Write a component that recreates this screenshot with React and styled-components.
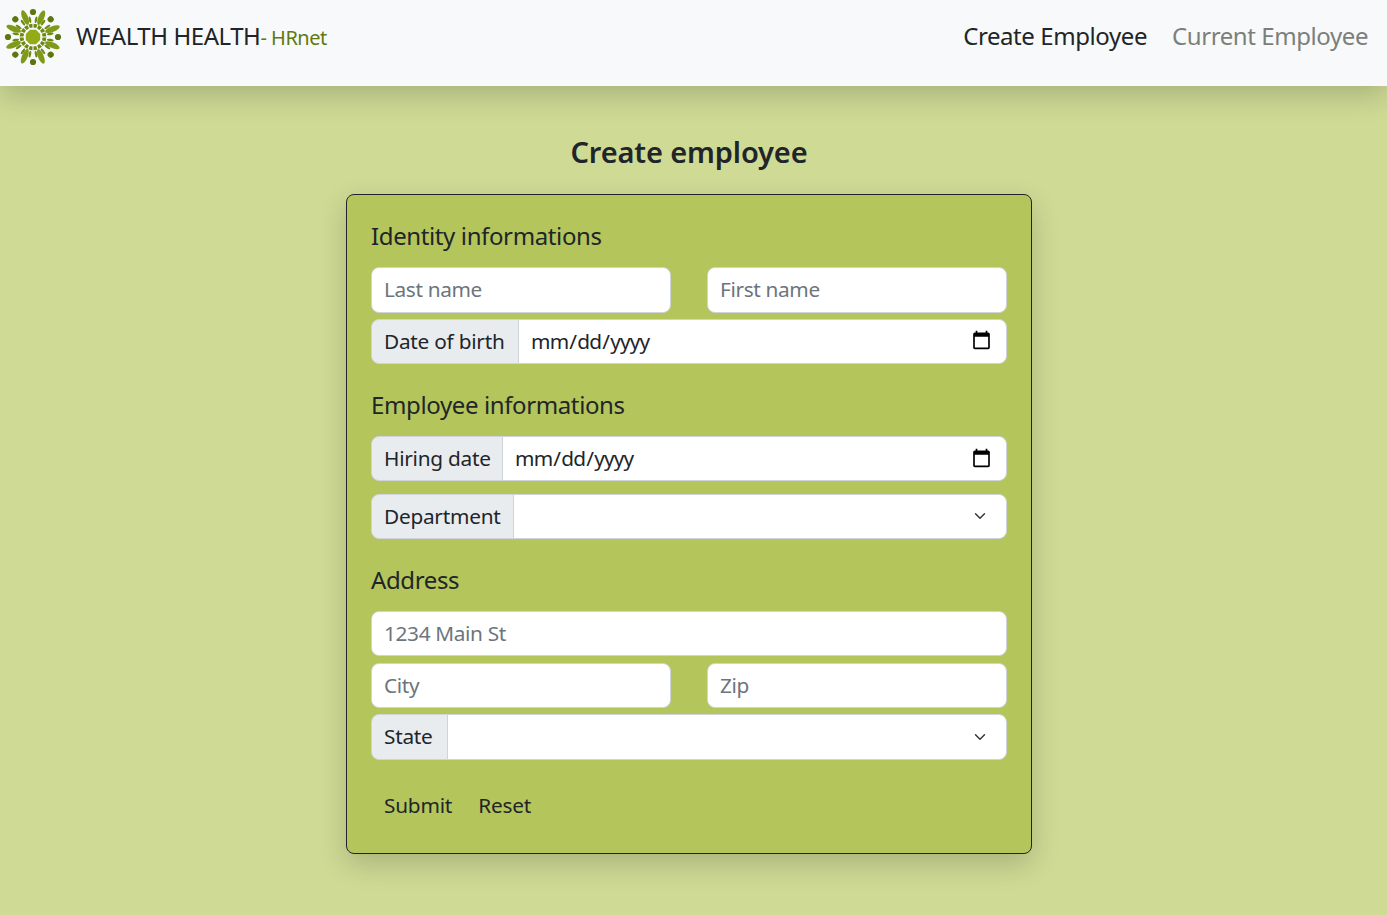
import React from "react";
import styled, { createGlobalStyle } from "styled-components";

const Global = createGlobalStyle`
  * { box-sizing: border-box; }
  html, body { margin: 0; }
  body {
    min-height: 100vh;
    background: #cfda95;
    color: #212529;
    font-family: "Noto Sans", "Open Sans", sans-serif;
  }
`;

const Header = styled.header`
  height: 86px;
  background: #f8f9fa;
  display: flex;
  align-items: center;
  justify-content: space-between;
  padding: 0 19px 12px 4px;
  box-shadow: 0 10px 28px rgba(0, 0, 0, 0.18);
  position: relative;
`;
const Brand = styled.div`
  display: flex;
  align-items: center;
  gap: 14px;
`;
const BrandText = styled.div`
  font-size: 24px;
  letter-spacing: -0.44px;
  color: #212529;
  white-space: nowrap;
  margin-top: -3px;
`;
const BrandSub = styled.span`
  font-size: 20px;
  letter-spacing: -0.5px;
  color: #5f7a10;
`;
const Nav = styled.nav`
  display: flex;
  gap: 25px;
  margin-top: -3px;
`;
const NavLink = styled.a`
  font-size: 24px;
  letter-spacing: -0.42px;
  color: ${(p) => (p.$active ? "#212529" : "#7b7f7a")};
`;
const Main = styled.main`
  display: flex;
  flex-direction: column;
  align-items: center;
  padding: 46px 9px 60px 0;
`;
const Title = styled.h1`
  margin: 0 0 22px;
  font-size: 29px;
  line-height: 40px;
  font-weight: 600;
  letter-spacing: -0.13px;
  color: #212529;
`;
const Card = styled.form`
  width: 686px;
  height: 660px;
  background: #b3c55b;
  border: 1px solid #212529;
  border-radius: 8px;
  padding: 0 24px;
  box-shadow: 0 10px 28px rgba(0, 0, 0, 0.18);
`;
const SectionTitle = styled.h2`
  margin: ${(p) => (p.$first ? "25.5px 0 17.5px" : "25.7px 0 17.2px")};
  font-size: 24px;
  line-height: 29px;
  font-weight: 400;
  letter-spacing: -0.38px;
  color: #212529;
`;
const Row = styled.div`
  display: flex;
  gap: 36px;
  margin-bottom: ${(p) => p.$mb || "6.1px"};
`;
const fieldBase = `
  height: 45.5px;
  font: inherit;
  font-size: 20.8px;
  color: #212529;
  background-color: #fff;
  border: 1px solid #ced4da;
  padding: 0 12px 1px;
  outline: none;
`;
const TextInput = styled.input`
  ${fieldBase}
  flex: 1;
  min-width: 0;
  border-radius: 8px;
  letter-spacing: -0.35px;
  &::placeholder {
    color: #6c757d;
    opacity: 1;
  }
`;
const InputGroup = styled.div`
  display: flex;
  flex: 1;
`;
const Addon = styled.label`
  height: 45.5px;
  display: flex;
  align-items: center;
  padding: 0 12px 1px;
  font-size: 20.8px;
  letter-spacing: -0.25px;
  color: #212529;
  background: #e9ecef;
  border: 1px solid #ced4da;
  border-radius: 8px 0 0 8px;
  white-space: nowrap;
  width: ${(p) => p.$width};
  flex: none;
`;
const DateInput = styled.input`
  ${fieldBase}
  flex: 1;
  min-width: 0;
  margin-left: -1px;
  border-radius: 0 8px 8px 0;
  padding-left: 11px;
  letter-spacing: -0.8px;
  &::-webkit-calendar-picker-indicator {
    margin-right: 0;
  }
`;
const Select = styled.select`
  ${fieldBase}
  flex: 1;
  margin-left: -1px;
  border-radius: 0 8px 8px 0;
  appearance: none;
  background-image: url("data:image/svg+xml,%3csvg xmlns='http://www.w3.org/2000/svg' viewBox='0 0 16 16'%3e%3cpath fill='none' stroke='%23343a40' stroke-linecap='round' stroke-linejoin='round' stroke-width='2' d='m2 5 6 6 6-6'/%3e%3c/svg%3e");
  background-repeat: no-repeat;
  background-position: right 20px center;
  background-size: 12px 12px;
`;
const Actions = styled.div`
  display: flex;
  margin-top: 23px;
`;
const Button = styled.button`
  height: 45.2px;
  background: transparent;
  border: 1px solid transparent;
  padding: 0 12px;
  font: inherit;
  font-size: 20.8px;
  letter-spacing: -0.2px;
  color: #212529;
`;

function Logo() {
  const eight = [0, 45, 90, 135, 180, 225, 270, 315];
  const sixteen = Array.from({ length: 16 }, (_, i) => i * 22.5);
  return (
    <svg width="58" height="58" viewBox="-29 -29 58 58" aria-label="Wealth Health logo">
      {eight.map((a) => (
        <g key={a} transform={`rotate(${a})`}>
          <circle cx="0" cy="-25" r="3.1" fill="#5c7610" />
          <ellipse cx="0" cy="-21" rx="2.9" ry="7.8" fill="#7f9a18" transform="rotate(23)" />
          <ellipse cx="0" cy="-17.5" rx="1.2" ry="3.4" fill="#6f8a14" transform="rotate(10)" />
          <ellipse cx="0" cy="-17.5" rx="1.2" ry="3.4" fill="#6f8a14" transform="rotate(-10)" />
        </g>
      ))}
      {sixteen.map((a) => (
        <path
          key={a}
          d="M-1.4 -9.4 L1.4 -9.4 L2 -13.2 L-2 -13.2 Z"
          fill="#6d8813"
          transform={`rotate(${a + 11.25})`}
        />
      ))}
      <polygon
        points="-3,-7.2 3,-7.2 7.2,-3 7.2,3 3,7.2 -3,7.2 -7.2,3 -7.2,-3"
        fill="#92ab16"
      />
    </svg>
  );
}

export default function App() {
  return (
    <>
      <Global />
      <Header>
        <Brand>
          <Logo />
          <BrandText>
            WEALTH HEALTH<BrandSub>- HRnet</BrandSub>
          </BrandText>
        </Brand>
        <Nav>
          <NavLink $active>Create Employee</NavLink>
          <NavLink>Current Employee</NavLink>
        </Nav>
      </Header>
      <Main>
        <Title>Create employee</Title>
        <Card onSubmit={(e) => e.preventDefault()}>
          <SectionTitle $first>Identity informations</SectionTitle>
          <Row>
            <TextInput placeholder="Last name" />
            <TextInput placeholder="First name" />
          </Row>
          <Row $mb="0">
            <InputGroup>
              <Addon $width="148px">Date of birth</Addon>
              <DateInput type="date" />
            </InputGroup>
          </Row>

          <SectionTitle>Employee informations</SectionTitle>
          <Row $mb="12.1px">
            <InputGroup>
              <Addon $width="132px">Hiring date</Addon>
              <DateInput type="date" />
            </InputGroup>
          </Row>
          <Row $mb="0">
            <InputGroup>
              <Addon $width="143px">Department</Addon>
              <Select defaultValue="">
                <option value=""></option>
              </Select>
            </InputGroup>
          </Row>

          <SectionTitle>Address</SectionTitle>
          <Row>
            <TextInput placeholder="1234 Main St" />
          </Row>
          <Row>
            <TextInput placeholder="City" />
            <TextInput placeholder="Zip" />
          </Row>
          <Row $mb="0">
            <InputGroup>
              <Addon $width="77px">State</Addon>
              <Select defaultValue="">
                <option value=""></option>
              </Select>
            </InputGroup>
          </Row>
          <Actions>
            <Button type="submit">Submit</Button>
            <Button type="reset">Reset</Button>
          </Actions>
        </Card>
      </Main>
    </>
  );
}
